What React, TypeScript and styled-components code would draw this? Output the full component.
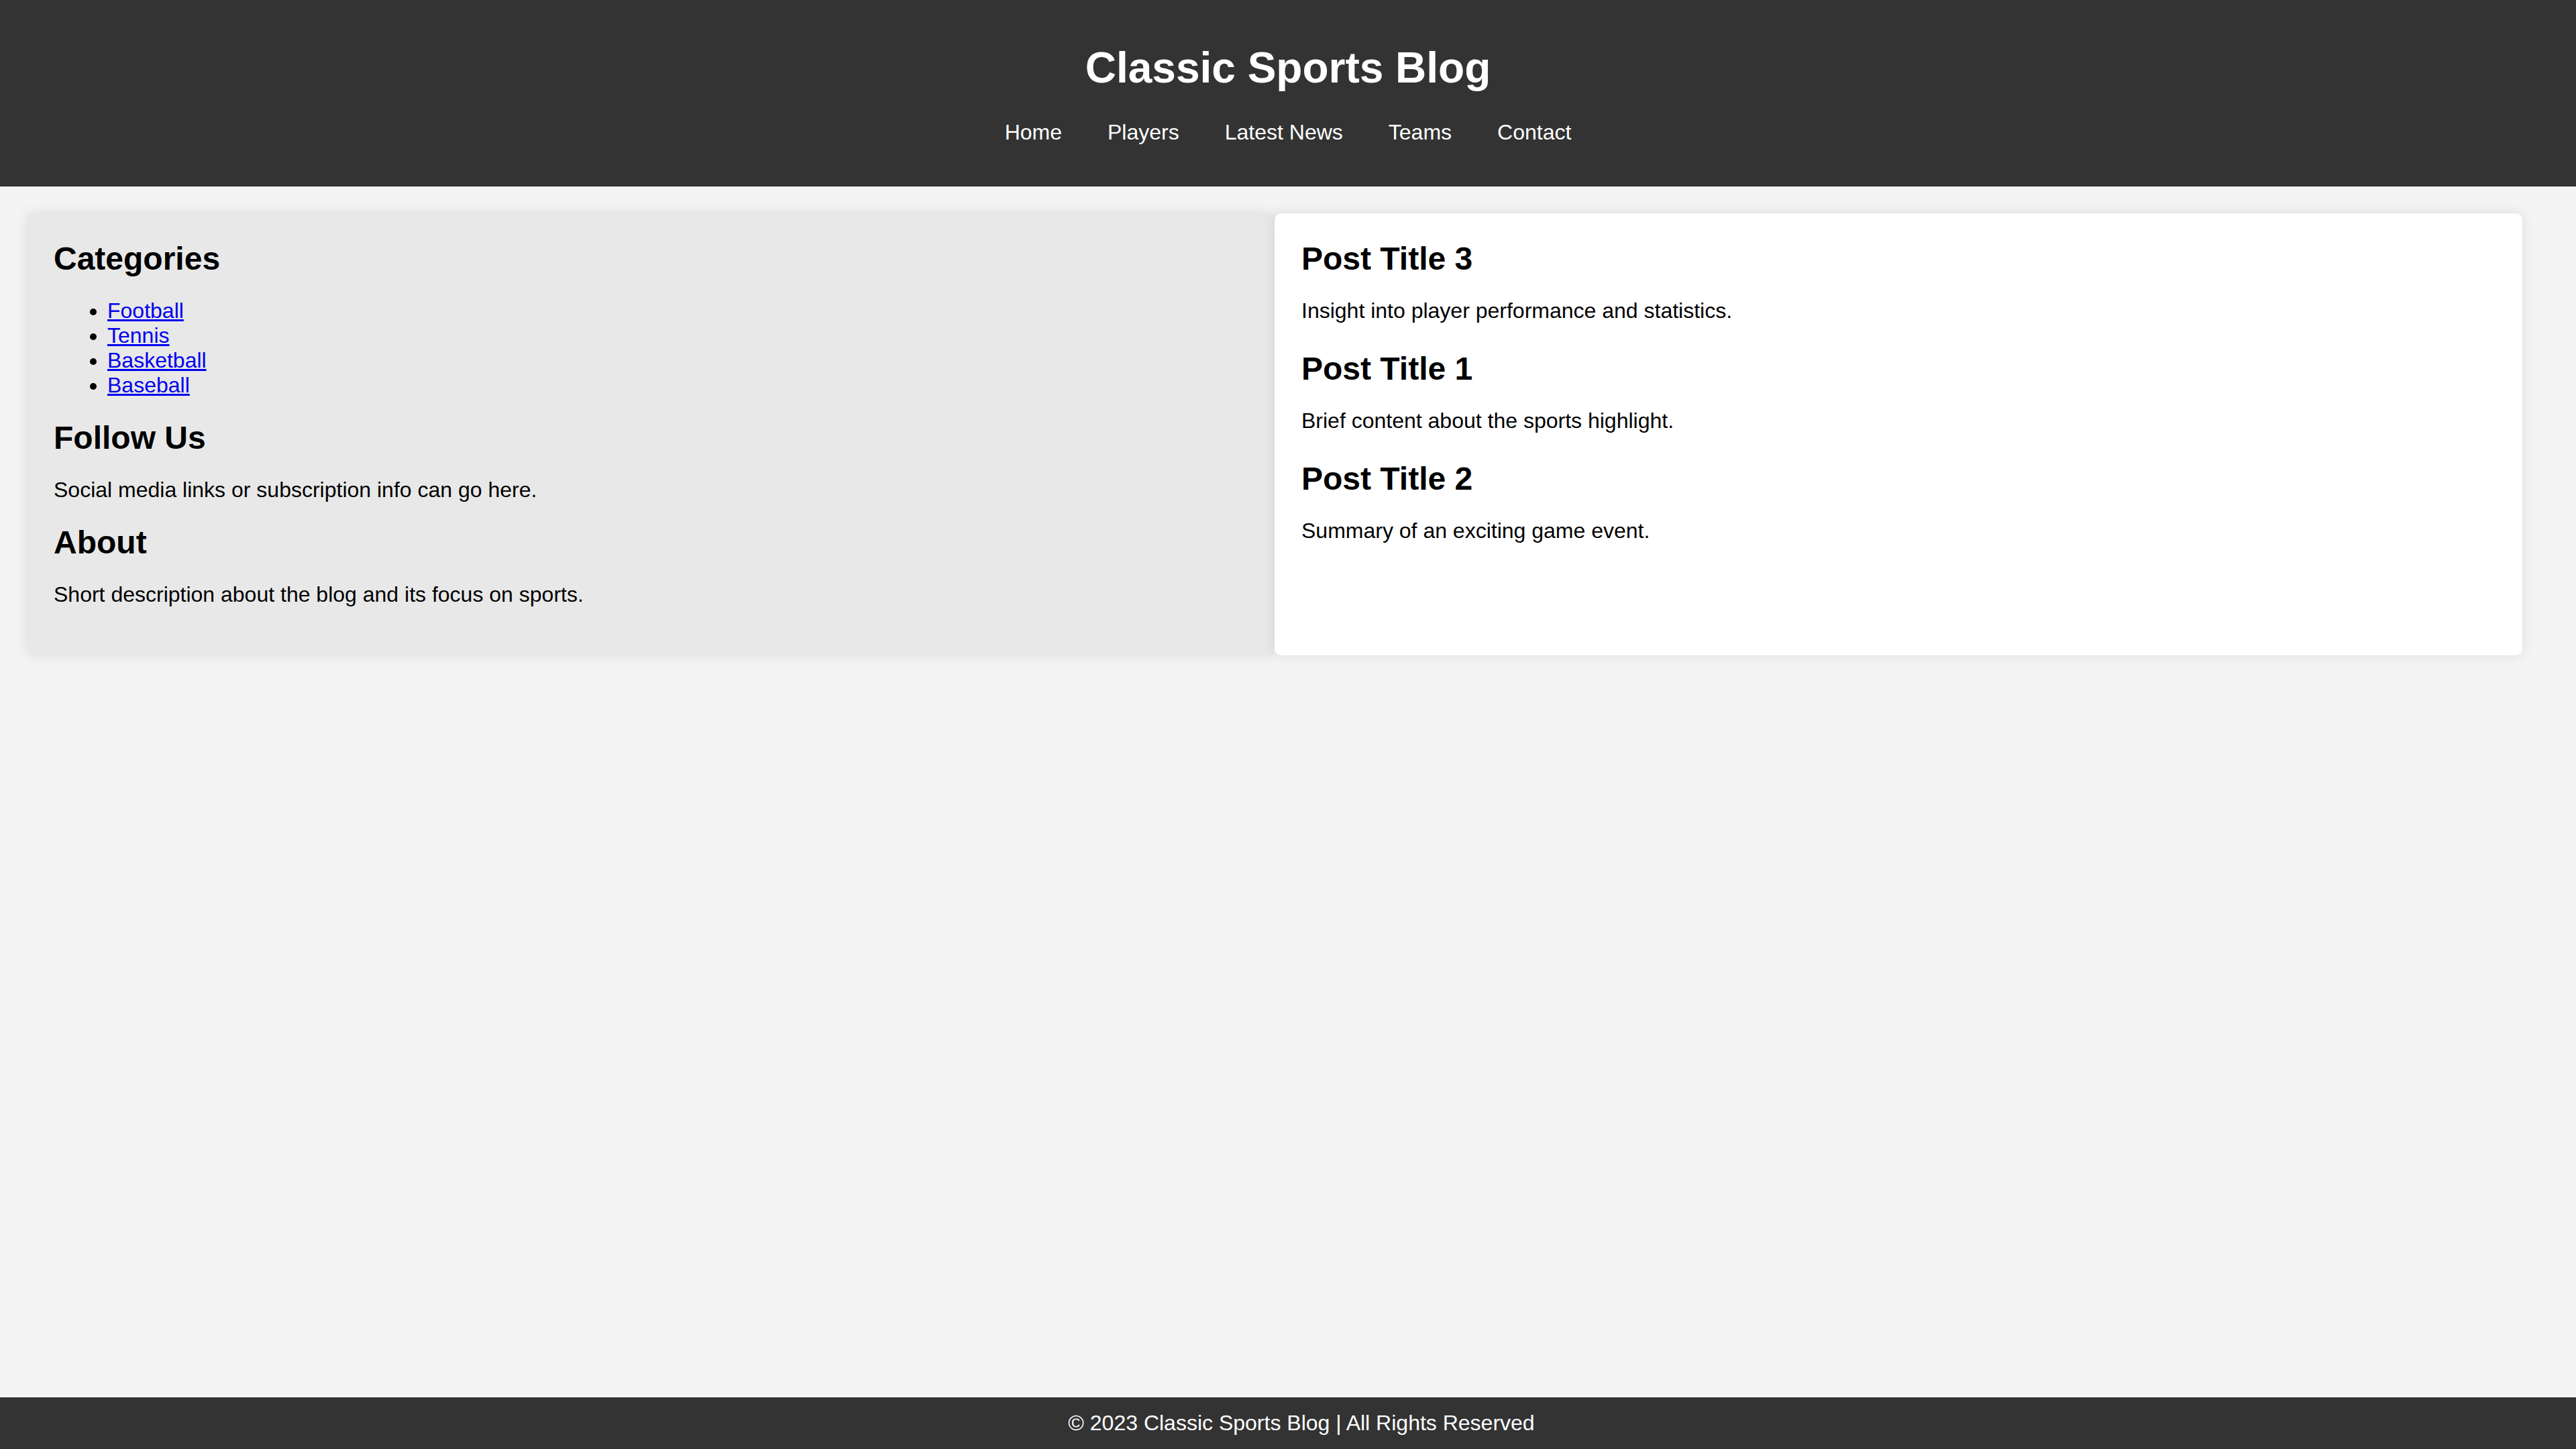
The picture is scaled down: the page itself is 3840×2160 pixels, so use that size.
import React from "react";
import styled, { createGlobalStyle } from "styled-components";

const GlobalStyle = createGlobalStyle`
  html, body {
    margin: 0;
    padding: 0;
  }
  body {
    background: #f4f4f4;
    font-family: "Liberation Sans", Arial, Helvetica, sans-serif;
    font-size: 32px;
    color: #000;
  }
`;

const Page = styled.div`
  min-height: 100vh;
  display: flex;
  flex-direction: column;
`;

const Header = styled.header`
  background: #333;
  color: #fff;
  text-align: center;
  padding: 64px 0 62px;
`;

const SiteTitle = styled.h1`
  margin: 0;
  font-size: 64px;
  font-weight: bold;
  line-height: normal;
`;

const NavList = styled.ul`
  list-style: none;
  margin: 41px 0 0;
  padding: 0;
`;

const NavItem = styled.li`
  display: inline;
  margin: 0 34px;
`;

const NavLink = styled.a`
  color: #fff;
  text-decoration: none;
`;

const Main = styled.main`
  flex: 1;
  padding: 40px 80px 40px 40px;
`;

const Columns = styled.div`
  display: flex;
  align-items: stretch;
`;

const Panel = styled.section<{ $tone: "muted" | "white" }>`
  flex: 1;
  min-width: 0;
  padding: 40px;
  border-radius: 10px;
  background: ${(p) => (p.$tone === "muted" ? "#e8e8e8" : "#ffffff")};
  box-shadow: 0 0 20px rgba(0, 0, 0, 0.1);
`;

const Heading = styled.h2`
  margin: 0 0 20px;
  font-size: 48px;
  font-weight: bold;
  line-height: normal;
`;

const Text = styled.p`
  margin: 32px 0;
`;

const CategoryList = styled.ul`
  margin: 32px 0;
  padding-left: 80px;
`;

const CategoryLink = styled.a`
  color: #0000ee;
  text-decoration: underline;
`;

const Post = styled.article`
  margin-bottom: 40px;
`;

const Footer = styled.footer`
  background: #333;
  color: #fff;
  text-align: center;
  padding: 20px 0 20px 40px;
`;

const navItems = ["Home", "Players", "Latest News", "Teams", "Contact"];
const categories = ["Football", "Tennis", "Basketball", "Baseball"];
const posts = [
  { title: "Post Title 3", body: "Insight into player performance and statistics." },
  { title: "Post Title 1", body: "Brief content about the sports highlight." },
  { title: "Post Title 2", body: "Summary of an exciting game event." },
];

export default function App() {
  return (
    <Page>
      <GlobalStyle />
      <Header>
        <SiteTitle>Classic Sports Blog</SiteTitle>
        <nav>
          <NavList>
            {navItems.map((n) => (
              <NavItem key={n}>
                <NavLink href="#">{n}</NavLink>
              </NavItem>
            ))}
          </NavList>
        </nav>
      </Header>
      <Main>
        <Columns>
          <Panel $tone="muted" as="aside">
            <Heading>Categories</Heading>
            <CategoryList>
              {categories.map((c) => (
                <li key={c}>
                  <CategoryLink href="#">{c}</CategoryLink>
                </li>
              ))}
            </CategoryList>
            <Heading>Follow Us</Heading>
            <Text>Social media links or subscription info can go here.</Text>
            <Heading>About</Heading>
            <Text>Short description about the blog and its focus on sports.</Text>
          </Panel>
          <Panel $tone="white">
            {posts.map((p) => (
              <Post key={p.title}>
                <Heading>{p.title}</Heading>
                <Text>{p.body}</Text>
              </Post>
            ))}
          </Panel>
        </Columns>
      </Main>
      <Footer>© 2023 Classic Sports Blog | All Rights Reserved</Footer>
    </Page>
  );
}
